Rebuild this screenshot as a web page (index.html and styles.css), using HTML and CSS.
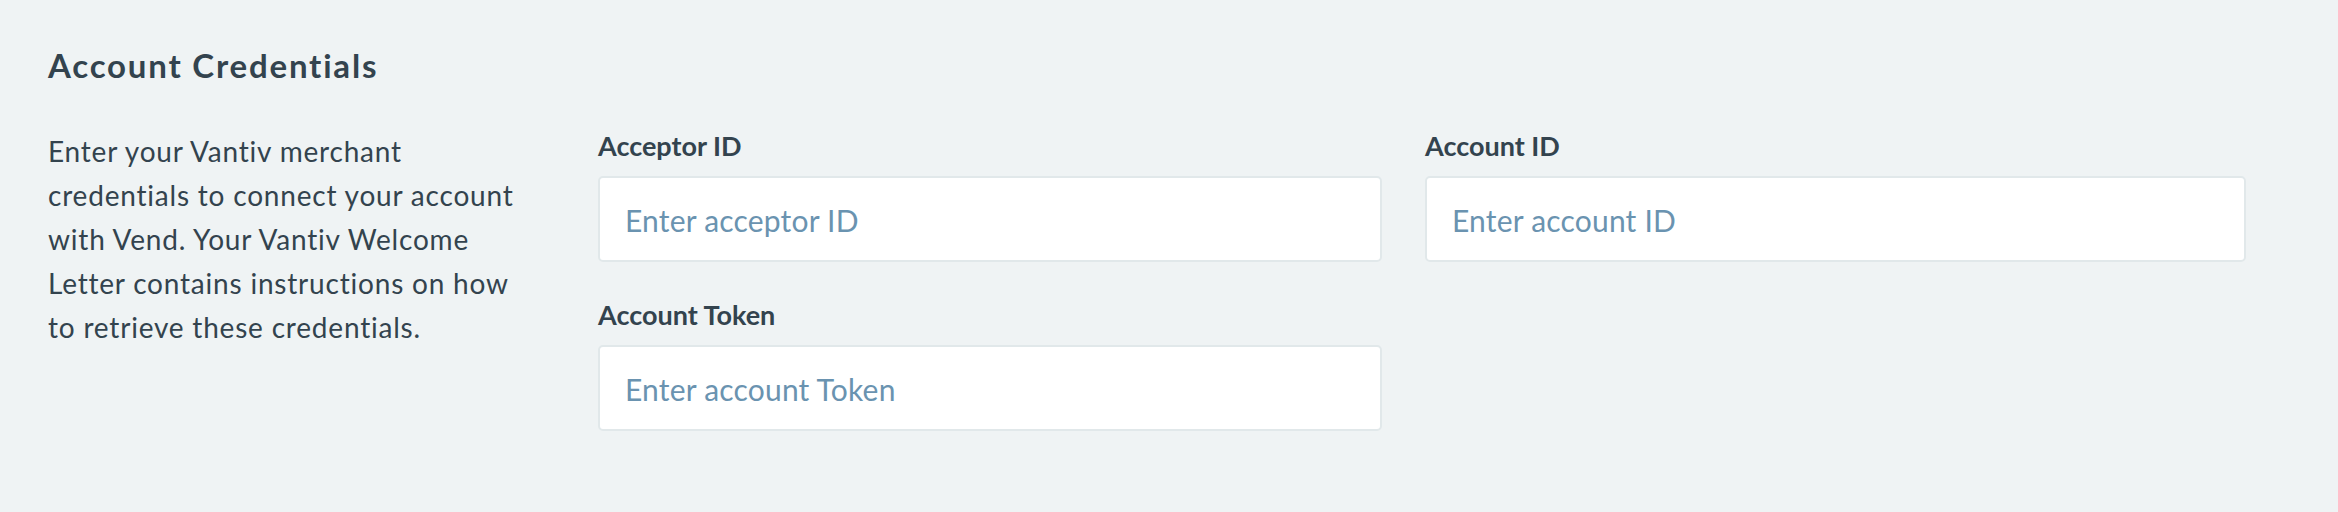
FILE: index.html
```html
<!DOCTYPE html>
<html lang="en">
<head>
<meta charset="utf-8">
<title>Account Credentials</title>
<link rel="stylesheet" href="styles.css">
</head>
<body>
<section class="panel">
  <h2 class="title">Account Credentials</h2>
  <div class="content">
    <p class="desc">Enter your Vantiv merchant credentials to connect your account with Vend. Your Vantiv Welcome Letter contains instructions on how to retrieve these credentials.</p>
    <div class="fields">
      <div class="field">
        <label class="label" for="acceptor">Acceptor ID</label>
        <input class="input" id="acceptor" type="text" placeholder="Enter acceptor ID">
      </div>
      <div class="field">
        <label class="label" for="account">Account ID</label>
        <input class="input" id="account" type="text" placeholder="Enter account ID">
      </div>
      <div class="field">
        <label class="label" for="token">Account Token</label>
        <input class="input" id="token" type="text" placeholder="Enter account Token">
      </div>
    </div>
  </div>
</section>
</body>
</html>
```
FILE: styles.css
```css
html, body {
  margin: 0;
  padding: 0;
  background: #eff3f4;
}
body {
  font-family: Lato, "Open Sans", sans-serif;
  font-variant-ligatures: none;
  color: #33434e;
}
.panel {
  padding: 45px 48px 0 48px;
}
.title {
  margin: 0;
  font-size: 33px;
  font-weight: 700;
  line-height: 40px;
  letter-spacing: 1.8px;
  color: #33434e;
}
.content {
  display: flex;
  margin-top: 44px;
}
.desc {
  width: 492px;
  margin: 0;
  font-size: 28px;
  line-height: 44px;
  letter-spacing: 0.8px;
  color: #33434e;
}
.fields {
  margin-left: 58px;
  display: grid;
  grid-template-columns: 784px 821px;
  column-gap: 43px;
  row-gap: 36px;
}
.field {
  display: flex;
  flex-direction: column;
}
.label {
  font-size: 27px;
  font-weight: 700;
  line-height: 34px;
  color: #33434e;
  margin-bottom: 13px;
}
.input {
  box-sizing: border-box;
  height: 86px;
  padding: 2px 25px 0 25px;
  border: 2px solid #e1e8ea;
  border-radius: 5px;
  background: #ffffff;
  font-family: Lato, "Open Sans", sans-serif;
  font-size: 30px;
  letter-spacing: 0.2px;
  color: #33434e;
  outline: none;
}
.input::placeholder {
  color: #6a93b0;
  opacity: 1;
}
```
